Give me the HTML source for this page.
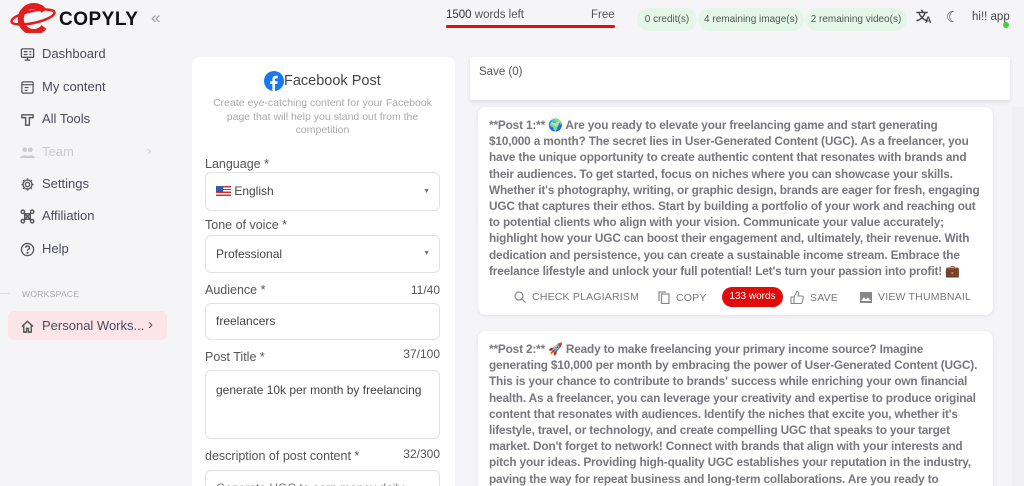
<!DOCTYPE html>
<html><head><meta charset="utf-8"><style>
*{box-sizing:border-box;margin:0;padding:0}
html,body{width:1024px;height:486px;overflow:hidden}
body{background:#f5f5f8;font-family:"Liberation Sans",sans-serif;position:relative;color:#4b4b5a}
.a{position:absolute}
.nav{position:absolute;left:20px;font-size:13px;color:#4b4b5a;display:flex;align-items:center;gap:7px;line-height:16px}
.nav svg{width:15px;height:15px}
.pill{position:absolute;top:8px;height:23px;border-radius:12px;background:#e3f6e7;color:#555;font-size:10px;line-height:23px;text-align:center}
.card{position:absolute;background:#fff;border-radius:8px}
.lbl{position:absolute;left:205px;font-size:12.5px;color:#555}
.cnt{position:absolute;right:584px;font-size:12px;color:#555}
.inp{position:absolute;left:205px;width:235px;border:1px solid #e2e2e6;border-radius:6px;background:#fff;font-size:12px;color:#444;padding-left:10px}
.post{position:absolute;left:478px;width:515px;background:#fff;border-radius:8px;box-shadow:0 1px 4px rgba(0,0,0,.08);padding:10px 12px 0 11px;font-size:11.8px;font-weight:bold;color:#77777e;line-height:16.2px;overflow:hidden;letter-spacing:-.15px}
.act{position:absolute;top:291px;font-size:10.5px;color:#777;letter-spacing:.2px;display:flex;align-items:center;gap:6px}
</style></head><body>
<svg class="a" style="left:8px;top:3px" width="50" height="30" viewBox="0 0 50 30"><ellipse cx="25" cy="14" rx="22" ry="6" fill="none" stroke="#e21d1d" stroke-width="2.5" transform="rotate(-12 25 14)"/><path d="M36 8 A13 13 0 1 0 36 24" fill="none" stroke="#e21d1d" stroke-width="6"/></svg>
<div class="a" style="left:59px;top:9px;font-size:19px;font-weight:bold;color:#111;letter-spacing:.5px">COPYLY</div>
<div class="a" style="left:151px;top:8px;font-size:17px;color:#999">«</div>

<div class="nav" style="top:46px"><svg viewBox="0 0 16 16" fill="none" stroke="#555" stroke-width="1.4"><rect x="1.5" y="2" width="13" height="9" rx="1"/><path d="M8 11v3M5 14h6M4 5h4M4 8h4M10 5h2M10 8h2"/></svg>Dashboard</div>
<div class="nav" style="top:79px"><svg viewBox="0 0 16 16" fill="none" stroke="#555" stroke-width="1.3"><rect x="2" y="2" width="12" height="12" rx="1.5"/><path d="M2 5h12M5 8h4M5 11h3"/></svg>My content</div>
<div class="nav" style="top:111px"><svg viewBox="0 0 16 16" fill="none" stroke="#555" stroke-width="1.5"><path d="M2 3h12v3H10v8H6V6H2z"/></svg>All Tools</div>
<div class="nav" style="top:144px;color:#ccc"><svg viewBox="0 0 16 16" fill="#ccc"><circle cx="5" cy="5" r="2.5"/><circle cx="11" cy="5" r="2.5"/><path d="M0 14c0-4 10-4 10 0zM7 14c0-4 9-4 9 0z"/></svg>Team</div>
<div class="a" style="left:147px;top:143px;color:#ccc;font-size:13px">›</div>
<div class="nav" style="top:176px"><svg viewBox="0 0 16 16" fill="none" stroke="#555" stroke-width="1.4"><circle cx="8" cy="8" r="2.3"/><path d="M8 1.5v2M8 12.5v2M1.5 8h2M12.5 8h2M3.4 3.4l1.4 1.4M11.2 11.2l1.4 1.4M3.4 12.6l1.4-1.4M11.2 4.8l1.4-1.4"/><circle cx="8" cy="8" r="4.8"/></svg>Settings</div>
<div class="nav" style="top:208px"><svg viewBox="0 0 16 16" fill="none" stroke="#555" stroke-width="1.5"><circle cx="3" cy="3" r="1.8"/><circle cx="13" cy="3" r="1.8"/><circle cx="3" cy="13" r="1.8"/><circle cx="13" cy="13" r="1.8"/><path d="M4.5 4.5l7 7M11.5 4.5l-7 7M5 5h6v6H5z"/></svg>Affiliation</div>
<div class="nav" style="top:241px"><svg viewBox="0 0 16 16" fill="none" stroke="#555" stroke-width="1.4"><circle cx="8" cy="8" r="6.5"/><path d="M6 6.2a2 2 0 1 1 2.6 1.9c-.5.2-.6.6-.6 1.2"/><circle cx="8" cy="11.5" r=".5" fill="#555"/></svg>Help</div>
<div class="a" style="left:0;top:293px;width:10px;height:1px;background:#ddd"></div>
<div class="a" style="left:22px;top:289px;font-size:8.5px;color:#aaa;letter-spacing:.3px">WORKSPACE</div>
<div class="a" style="left:8px;top:311px;width:159px;height:29px;border-radius:6px;background:#fbe5e8"></div>
<div class="nav" style="top:318px"><svg viewBox="0 0 16 16" fill="none" stroke="#555" stroke-width="1.5"><path d="M2 8l6-5.5L14 8M4 6.5V14h3v-4h2v4h3V6.5"/></svg>Personal Works...</div>
<div class="a" style="left:148px;top:316px;font-size:15px;color:#555">›</div>

<div class="a" style="left:446px;top:9px;font-size:11.5px;color:#555"><span style="color:#333">1500</span> words left</div>
<div class="a" style="left:591px;top:9px;font-size:11.5px;color:#555">Free</div>
<div class="a" style="left:446px;top:25px;width:169px;height:3px;background:#e10e0e;border-radius:2px"></div>
<div class="pill" style="left:637px;width:60px">0 credit(s)</div>
<div class="pill" style="left:698px;width:106px">4 remaining image(s)</div>
<div class="pill" style="left:805px;width:102px">2 remaining video(s)</div>
<div class="a" style="left:916px;top:9px;font-size:12px;color:#444;font-weight:bold;line-height:14px">文</div>
<div class="a" style="left:925px;top:15px;font-size:9px;color:#444;font-weight:bold">A</div>
<div class="a" style="left:946px;top:8px;font-size:15px;color:#444">☾</div>
<div class="a" style="left:972px;top:11px;font-size:11.5px;color:#444">hi!! app</div>
<div class="a" style="left:1003px;top:22px;width:6px;height:6px;border-radius:3px;background:#4c4"></div>

<div class="card" style="left:192px;top:57px;width:263px;height:440px"></div>
<svg class="a" style="left:264px;top:71px" width="20" height="20" viewBox="0 0 20 20"><circle cx="10" cy="10" r="10" fill="#1877f2"/><path d="M11 20v-7h2.3l.4-2.8H11V8.6c0-.8.3-1.4 1.4-1.4h1.4V4.8c-.3 0-1.1-.1-2-.1-2 0-3.4 1.2-3.4 3.5v2H6.2V13h2.2v7z" fill="#fff"/></svg>
<div class="a" style="left:284px;top:73px;font-size:14.5px;color:#444">Facebook Post</div>
<div class="a" style="left:210px;top:97px;width:225px;font-size:10.5px;color:#aaa;text-align:center;line-height:13.5px">Create eye-catching content for your Facebook page that will help you stand out from the competition</div>
<div class="lbl" style="top:157px">Language *</div>
<div class="inp" style="top:172px;height:39px;line-height:37px;padding-left:10px"><span style="display:inline-block;width:15px;height:10px;background:repeating-linear-gradient(#c33 0 1.4px,#fff 1.4px 2.8px);position:relative;vertical-align:-1px"><span style="position:absolute;left:0;top:0;width:7px;height:6px;background:#3a5aa8"></span></span> English<span style="position:absolute;right:9px;top:0;font-size:7px;color:#777">▼</span></div>
<div class="lbl" style="top:218px">Tone of voice *</div>
<div class="inp" style="top:235px;height:38px;line-height:36px">Professional<span style="position:absolute;right:9px;top:0;font-size:7px;color:#777">▼</span></div>
<div class="lbl" style="top:283px">Audience *</div><div class="cnt" style="top:283px">11/40</div>
<div class="inp" style="top:303px;height:37px;line-height:35px">freelancers</div>
<div class="lbl" style="top:350px">Post Title *</div><div class="cnt" style="top:347px">37/100</div>
<div class="inp" style="top:370px;height:69px;padding-top:12px">generate 10k per month by freelancing</div>
<div class="lbl" style="top:449px">description of post content *</div><div class="cnt" style="top:447px">32/300</div>
<div class="inp" style="top:470px;height:40px;padding-top:10px;color:#777">Generate UGC to earn money daily</div>

<div class="card" style="left:470px;top:57px;width:540px;height:43px;border-radius:2px;box-shadow:0 2px 4px rgba(0,0,0,.1)"></div>
<div class="a" style="left:479px;top:66px;font-size:11.5px;color:#555">Save (0)</div>
<div class="a" style="left:1012px;top:107px;width:12px;height:379px;background:#f0f0f2"></div>

<div class="post" style="top:107px;height:208px">**Post 1:** 🌍 Are you ready to elevate your freelancing game and start generating $10,000 a month? The secret lies in User-Generated Content (UGC). As a freelancer, you have the unique opportunity to create authentic content that resonates with brands and their audiences. To get started, focus on niches where you can showcase your skills. Whether it's photography, writing, or graphic design, brands are eager for fresh, engaging UGC that captures their ethos. Start by building a portfolio of your work and reaching out to potential clients who align with your vision. Communicate your value accurately; highlight how your UGC can boost their engagement and, ultimately, their revenue. With dedication and persistence, you can create a sustainable income stream. Embrace the freelance lifestyle and unlock your full potential! Let's turn your passion into profit! 💼</div>
<div class="act" style="left:514px"><svg width="12" height="12" viewBox="0 0 12 12" fill="none" stroke="#888" stroke-width="1.2"><circle cx="5" cy="5" r="4"/><path d="M8 8l3.5 3.5"/></svg>CHECK PLAGIARISM</div>
<div class="act" style="left:658px"><svg width="12" height="13" viewBox="0 0 12 13" fill="none" stroke="#888" stroke-width="1.2"><rect x="3.5" y="3" width="7.5" height="9.5"/><path d="M1 10V1h7"/></svg>COPY</div>
<div class="a" style="left:722px;top:287px;width:61px;height:20px;border-radius:10px;background:#e00b0b;color:#fff;font-size:10px;line-height:20px;text-align:center">133 words</div>
<div class="act" style="left:790px"><svg width="14" height="13" viewBox="0 0 14 13" fill="none" stroke="#888" stroke-width="1.1"><path d="M1 6h3v6.5H1zM4 6l3-5.5c1.5 0 1.8 1 1.5 2.5L8 5h4c1 0 1.5.8 1.3 1.6l-1.2 4.8c-.2.7-.7 1.1-1.4 1.1H4"/></svg>SAVE</div>
<div class="act" style="left:860px"><svg width="12" height="11" viewBox="0 0 12 11"><rect width="12" height="11" fill="#888"/><path d="M1 9l3-4 2 2.5 2-2 3 3.5z" fill="#fff"/></svg>VIEW THUMBNAIL</div>

<div class="post" style="top:331px;height:170px">**Post 2:** 🚀 Ready to make freelancing your primary income source? Imagine generating $10,000 per month by embracing the power of User-Generated Content (UGC). This is your chance to contribute to brands' success while enriching your own financial health. As a freelancer, you can leverage your creativity and expertise to produce original content that resonates with audiences. Identify the niches that excite you, whether it's lifestyle, travel, or technology, and create compelling UGC that speaks to your target market. Don't forget to network! Connect with brands that align with your interests and pitch your ideas. Providing high-quality UGC establishes your reputation in the industry, paving the way for repeat business and long-term collaborations. Are you ready to</div>
</body></html>
